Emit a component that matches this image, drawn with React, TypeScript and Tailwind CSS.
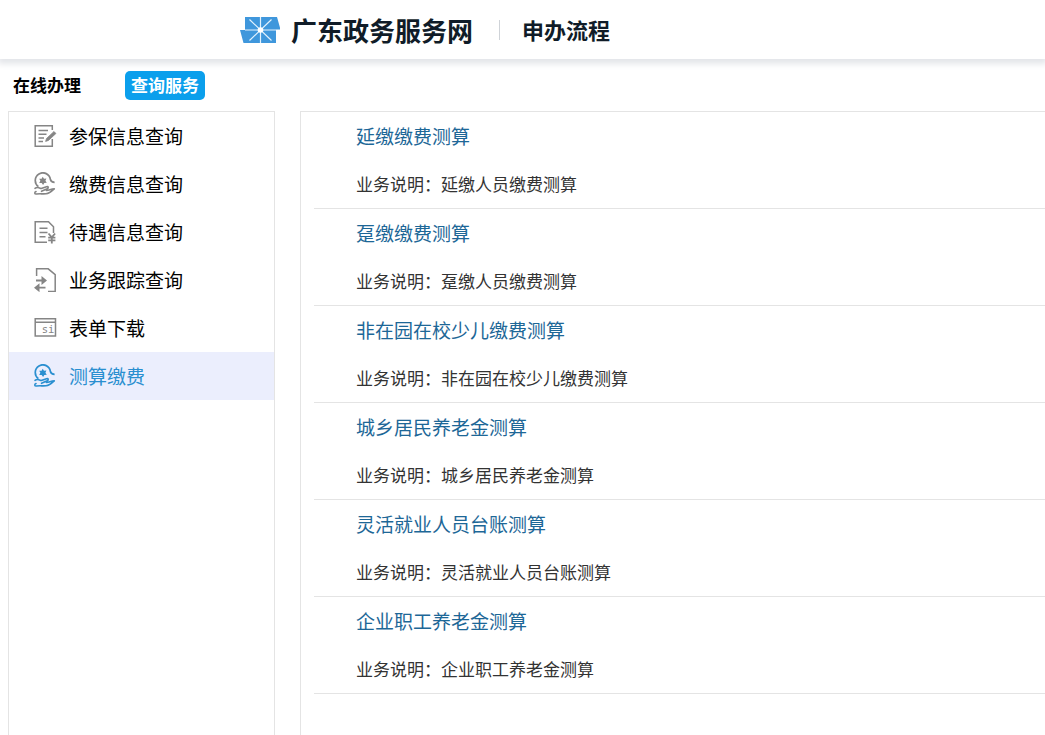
import type { ReactNode } from "react";

type IconProps = { children: ReactNode };

function Icon({ children }: IconProps) {
  return (
    <svg
      viewBox="0 0 24 24"
      className="size-6 shrink-0"
      fill="none"
      stroke="currentColor"
      strokeWidth="1.5"
      aria-hidden="true"
    >
      {children}
    </svg>
  );
}

function EditIcon() {
  return (
    <Icon>
      <path d="M19.3 6V1.7H2.2v20.6h17.1V15" />
      <path d="M5.5 6.6h9.5M5.5 10.2h8M5.5 14h5.5M5.5 17.6h4.5" />
      <path d="M12.6 17.4l1-3 7.4-6.9 1.9 2-7.4 6.9z" fill="currentColor" strokeWidth="0.8" />
    </Icon>
  );
}

function HandCoinIcon() {
  return (
    <Icon>
      <path d="M5.4 14.6A7.6 7.6 0 1 1 17.4 7.500C17.800 9.300 18.600 10.300 21.600 10.300" strokeWidth="1.7" />
      <path
        d="M9.7 4.800l1.300 1.900 2.400-.2-1 2.200 1.400 2-2.500.2-1.200 2.200-1.400-2.100-2.500-.1 1.200-2.100-1.200-2.100 2.400.1z"
        fill="currentColor"
        stroke="none"
      />
      <path
        d="M2 16.300C4.500 14.600 6.500 16 8.200 16.500L13.500 14.700C15.500 14.200 15.800 16 14.200 16.800L8.500 19.300M13.500 18.500C16 18.500 18 16.800 21.300 16.800C19 19 16.500 21.600 13 21.800C9 22 6.500 21.600 3.500 22C1.400 22.200 1.200 20.300 3 19.600"
        strokeWidth="1.6"
        strokeLinecap="round"
        strokeLinejoin="round"
      />
    </Icon>
  );
}

function BillIcon() {
  return (
    <Icon>
      <path d="M14 22.3H2.2V1.7h13.3l5 5V13" />
      <path d="M6.5 8.3h8M6.5 12.5h8M6.5 16.7h6" />
      <path d="M15.5 13.5l3.300 3.800 3.300-3.800M18.800 17v6.500M15.200 17.600h7.200M15.200 20.400h7.200" strokeWidth="1.8" />
    </Icon>
  );
}

function TransferIcon() {
  return (
    <Icon>
      <path d="M3.600 8V.8h11.600l7 5.800v17H15" />
      <path d="M3 12.500h9M3.500 19.700h9" strokeWidth="1.8" />
      <path d="M8.500 8l5.500 4.500-5.500 4.500zM6.500 15.200L1 19.700l5.500 4.500z" fill="currentColor" stroke="none" />
    </Icon>
  );
}

function FormIcon() {
  return (
    <Icon>
      <path d="M2.2 2.7h20.3v17.2H2.2zM2.2 6.2h20.3" />
      <text
        x="8.8"
        y="17.2"
        fontFamily="DejaVu Sans Mono, monospace"
        fontSize="10.5"
        fill="currentColor"
        stroke="none"
      >
        si
      </text>
    </Icon>
  );
}

function Logo() {
  return (
    <svg viewBox="0 0 40 26" className="h-[26px] w-10" aria-hidden="true">
      <path d="M5 0h32l3.500 12.500H36V26H3.500L0 13h5z" fill="#3f97dc" />
      <g stroke="#e3f2fd" strokeWidth="1.2">
        <path d="M20.500 0v26M5 13h31M9.500 2.500l22 21M31.500 2.500l-22 21" />
      </g>
      <circle cx="20.5" cy="13" r="2.8" fill="#fff" />
    </svg>
  );
}

const menu = [
  { label: "参保信息查询", icon: <EditIcon /> },
  { label: "缴费信息查询", icon: <HandCoinIcon /> },
  { label: "待遇信息查询", icon: <BillIcon /> },
  { label: "业务跟踪查询", icon: <TransferIcon /> },
  { label: "表单下载", icon: <FormIcon /> },
  { label: "测算缴费", icon: <HandCoinIcon />, active: true },
];

const services = [
  { title: "延缴缴费测算", detail: "延缴人员缴费测算" },
  { title: "趸缴缴费测算", detail: "趸缴人员缴费测算" },
  { title: "非在园在校少儿缴费测算", detail: "非在园在校少儿缴费测算" },
  { title: "城乡居民养老金测算", detail: "城乡居民养老金测算" },
  { title: "灵活就业人员台账测算", detail: "灵活就业人员台账测算" },
  { title: "企业职工养老金测算", detail: "企业职工养老金测算" },
];

export default function App() {
  return (
    <div className="flex min-h-screen flex-col bg-white font-['Noto_Sans_CJK_SC',sans-serif] text-black">
      <header className="flex h-[59px] items-center pl-60 text-[#101c28] shadow-[0_3px_6px_2px_#e4e6ea]">
        <Logo />
        <h1 className="ml-[11px] text-[26px] leading-[58px] font-bold">广东政务服务网</h1>
        <span className="mr-[22px] ml-[26px] h-5 w-px bg-[#cfd3d8]" />
        <span className="text-[22px] font-bold">申办流程</span>
      </header>

      <nav className="flex h-13 items-center pl-[13px] text-[17px] font-bold">
        <button type="button">在线办理</button>
        <button type="button" className="ml-11 h-[29px] rounded-[5px] bg-[#0b9fec] px-1.5 text-white">
          查询服务
        </button>
      </nav>

      <div className="flex grow gap-[25px] pl-2">
        <aside className="w-[267px] shrink-0 border border-b-0 border-[#e4e4e4]">
          <ul>
            {menu.map((item) => (
              <li key={item.label}>
                <a
                  href="#"
                  className={
                    item.active
                      ? "flex h-12 items-center gap-3 bg-[#ebeefd] pl-6 text-[19px] text-[#2a8fd0]"
                      : "flex h-12 items-center gap-3 pl-6 text-[19px]"
                  }
                >
                  <span className={item.active ? "" : "text-[#858585]"}>{item.icon}</span>
                  {item.label}
                </a>
              </li>
            ))}
          </ul>
        </aside>

        <main className="min-w-0 grow border-t border-l border-[#e4e4e4] pl-[13px]">
          {services.map((service) => (
            <section key={service.title} className="border-b border-[#e4e4e4] pl-[42px]">
              <h2 className="text-[19px] leading-[48px] text-[#1d6797]">
                <a href="#">{service.title}</a>
              </h2>
              <p className="text-[17px] leading-[48px] text-[#333]">业务说明：{service.detail}</p>
            </section>
          ))}
        </main>
      </div>
    </div>
  );
}
